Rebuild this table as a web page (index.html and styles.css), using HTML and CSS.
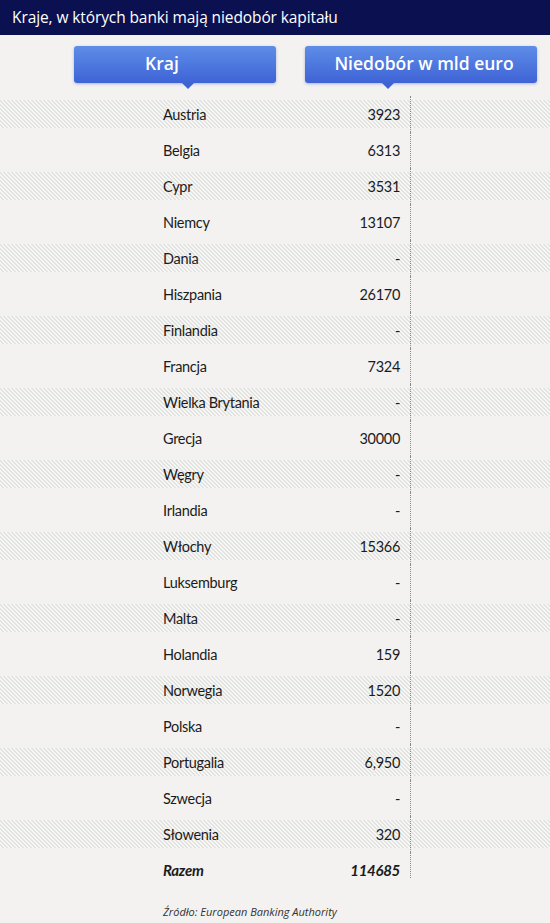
FILE: index.html
```html
<!DOCTYPE html>
<html lang="pl">
<head>
<meta charset="utf-8">
<link rel="stylesheet" href="styles.css">
</head>
<body>
<header class="title-bar">Kraje, w których banki mają niedobór kapitału</header>
<div class="heads">
  <div class="head head-kraj">Kraj<span class="tip tip-kraj"></span></div>
  <div class="head head-val">Niedobór w mld euro<span class="tip tip-val"></span></div>
</div>
<div class="table">
  <div class="row striped"><span class="name">Austria</span><span class="val">3923</span><span class="rest"></span></div>
  <div class="row"><span class="name">Belgia</span><span class="val">6313</span><span class="rest"></span></div>
  <div class="row striped"><span class="name">Cypr</span><span class="val">3531</span><span class="rest"></span></div>
  <div class="row"><span class="name">Niemcy</span><span class="val">13107</span><span class="rest"></span></div>
  <div class="row striped"><span class="name">Dania</span><span class="val">-</span><span class="rest"></span></div>
  <div class="row"><span class="name">Hiszpania</span><span class="val">26170</span><span class="rest"></span></div>
  <div class="row striped"><span class="name">Finlandia</span><span class="val">-</span><span class="rest"></span></div>
  <div class="row"><span class="name">Francja</span><span class="val">7324</span><span class="rest"></span></div>
  <div class="row striped"><span class="name">Wielka Brytania</span><span class="val">-</span><span class="rest"></span></div>
  <div class="row"><span class="name">Grecja</span><span class="val">30000</span><span class="rest"></span></div>
  <div class="row striped"><span class="name">Węgry</span><span class="val">-</span><span class="rest"></span></div>
  <div class="row"><span class="name">Irlandia</span><span class="val">-</span><span class="rest"></span></div>
  <div class="row striped"><span class="name">Włochy</span><span class="val">15366</span><span class="rest"></span></div>
  <div class="row"><span class="name">Luksemburg</span><span class="val">-</span><span class="rest"></span></div>
  <div class="row striped"><span class="name">Malta</span><span class="val">-</span><span class="rest"></span></div>
  <div class="row"><span class="name">Holandia</span><span class="val">159</span><span class="rest"></span></div>
  <div class="row striped"><span class="name">Norwegia</span><span class="val">1520</span><span class="rest"></span></div>
  <div class="row"><span class="name">Polska</span><span class="val">-</span><span class="rest"></span></div>
  <div class="row striped"><span class="name">Portugalia</span><span class="val">6,950</span><span class="rest"></span></div>
  <div class="row"><span class="name">Szwecja</span><span class="val">-</span><span class="rest"></span></div>
  <div class="row striped"><span class="name">Słowenia</span><span class="val">320</span><span class="rest"></span></div>
  <div class="row total"><span class="name">Razem</span><span class="val">114685</span><span class="rest"></span></div>
</div>
<p class="source">Źródło: European Banking Authority</p>
</body>
</html>
```
FILE: styles.css
```css
html, body {
  margin: 0;
  padding: 0;
}
body {
  width: 550px;
  height: 923px;
  overflow: hidden;
  background: #f3f2f0;
  font-family: "Lato", "Open Sans", sans-serif;
  color: #1b1b1b;
}
.title-bar {
  height: 35px;
  background: #0b1050;
  color: #ffffff;
  font-family: "Open Sans", sans-serif;
  font-size: 15.5px;
  line-height: 35px;
  padding-left: 12px;
  letter-spacing: -0.1px;
}
.heads {
  display: flex;
  padding: 11px 0 0 74px;
  height: 61px;
  box-sizing: border-box;
  gap: 29px;
}
.head {
  position: relative;
  height: 37px;
  border-radius: 3px;
  background: linear-gradient(#5e8de8, #3e63d5);
  box-shadow: 0 1px 3px rgba(40, 70, 160, 0.35);
  color: #ffffff;
  font-family: "Open Sans", sans-serif;
  font-weight: 600;
  font-size: 17.5px;
  line-height: 35px;
  text-align: center;
  box-sizing: border-box;
}
.head-kraj {
  width: 202px;
  padding-right: 26px;
}
.head-val {
  width: 232px;
  padding-left: 6px;
}
.tip {
  position: absolute;
  bottom: -6px;
  width: 0;
  height: 0;
  border-left: 6px solid transparent;
  border-right: 6px solid transparent;
  border-top: 6px solid #3e63d5;
}
.tip-kraj { left: 108px; }
.tip-val { left: 77px; }
.table {
  display: flex;
  flex-direction: column;
}
.row {
  display: grid;
  grid-template-columns: 163px 237px 10px 1fr;
  grid-template-rows: 36px;
  height: 36px;
  align-items: center;
  font-size: 14.5px;
  letter-spacing: -0.3px;
}
.row.striped {
  background-image: repeating-linear-gradient(45deg, #f7f7f6 0, #f7f7f6 1.8px, #e2e2e1 1.8px, #e2e2e1 2.83px);
  background-size: 100% 28px;
  background-position: 0 4px;
  background-repeat: no-repeat;
}
.row .name {
  grid-column: 2;
  grid-row: 1;
  justify-self: start;
}
.row .val {
  grid-column: 2;
  grid-row: 1;
  justify-self: end;
}
.row .rest {
  grid-column: 4;
  grid-row: 1;
  align-self: stretch;
  border-left: 1px dotted #8a8a8a;
}
.row.total {
  font-weight: 700;
  font-style: italic;
  font-size: 15px;
}
.row.total .rest {
  margin-bottom: 10px;
}
.source {
  margin: 16px 0 0 163px;
  font-family: "Open Sans", sans-serif;
  font-style: italic;
  font-size: 11px;
  line-height: 15px;
  color: #333333;
}
```
